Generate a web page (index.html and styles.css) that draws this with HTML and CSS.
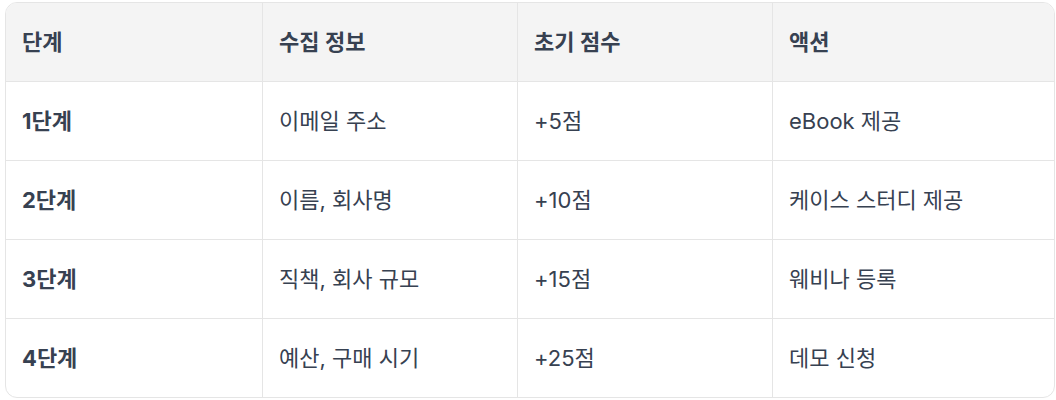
FILE: index.html
```html
<!DOCTYPE html>
<html lang="ko">
<head>
<meta charset="utf-8">
<link rel="stylesheet" href="styles.css">
</head>
<body>
<div class="table-wrap">
  <table class="grid">
    <colgroup>
      <col class="c1"><col class="c2"><col class="c3"><col class="c4">
    </colgroup>
    <thead>
      <tr><th>단계</th><th>수집 정보</th><th>초기 점수</th><th>액션</th></tr>
    </thead>
    <tbody>
      <tr><td class="stage">1단계</td><td>이메일 주소</td><td>+5점</td><td>eBook 제공</td></tr>
      <tr><td class="stage">2단계</td><td>이름, 회사명</td><td>+10점</td><td>케이스 스터디 제공</td></tr>
      <tr><td class="stage">3단계</td><td>직책, 회사 규모</td><td>+15점</td><td>웨비나 등록</td></tr>
      <tr><td class="stage">4단계</td><td>예산, 구매 시기</td><td>+25점</td><td>데모 신청</td></tr>
    </tbody>
  </table>
</div>
</body>
</html>
```

FILE: styles.css
```css
html, body {
  margin: 0;
  padding: 0;
  background: #ffffff;
}
body {
  padding: 2px 0 0 5px;
  font-family: Inter, "Noto Sans CJK KR", sans-serif;
  color: #374151;
}
.table-wrap {
  width: 1050px;
  box-sizing: border-box;
  border: 1px solid #e5e5e5;
  border-radius: 12px;
  overflow: hidden;
}
.grid {
  width: 1048px;
  table-layout: fixed;
  border-collapse: separate;
  border-spacing: 0;
  font-size: 22px;
  line-height: 30px;
}
.c1 { width: 257px; }
.c2 { width: 255px; }
.c3 { width: 255px; }
.c4 { width: 281px; }
th, td {
  text-align: left;
  padding: 24px 16px;
  border-right: 1px solid #e5e5e5;
  border-bottom: 1px solid #e5e5e5;
  vertical-align: middle;
}
th:last-child, td:last-child { border-right: none; }
tbody tr:last-child td { border-bottom: none; }
th {
  background: #f4f4f4;
  font-weight: 600;
  color: #374151;
}
td { font-weight: 400; }
td.stage { font-weight: 700; }
```
